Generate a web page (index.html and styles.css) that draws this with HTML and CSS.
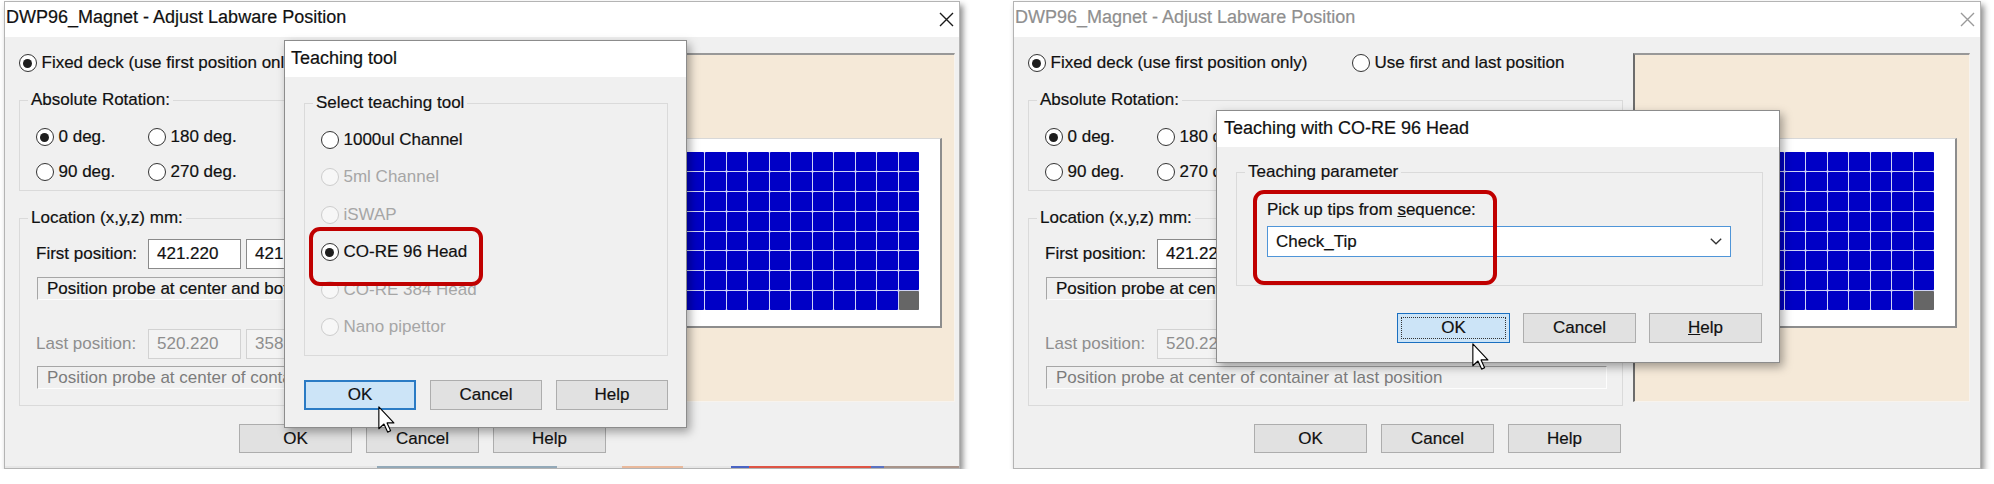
FILE: index.html
```html
<!DOCTYPE html>
<html>
<head>
<meta charset="utf-8">
<title>Adjust Labware Position</title>
<link rel="stylesheet" href="styles.css">
</head>
<body>
<div class="desk">

  <!-- LEFT WINDOW -->
  <div class="win win-a">
    <div class="titlebar">
      <span class="ttl">DWP96_Magnet - Adjust Labware Position</span>
      <svg class="close" width="15" height="15" viewBox="0 0 15 15"><path d="M1 1 L14 14 M14 1 L1 14" stroke="#1a1a1a" stroke-width="1.4" fill="none"/></svg>
    </div>
    <div class="wbody">
      <div class="col">
        <div class="toprow">
          <label class="opt opt1"><span class="rb on"></span>Fixed deck (use first position only)</label>
          <label class="opt"><span class="rb"></span>Use first and last position</label>
        </div>
        <fieldset class="grp rot">
          <legend>Absolute Rotation:</legend>
          <div class="rotgrid">
            <label class="opt"><span class="rb on"></span>0 deg.</label>
            <label class="opt"><span class="rb"></span>180 deg.</label>
            <label class="opt"><span class="rb"></span>90 deg.</label>
            <label class="opt"><span class="rb"></span>270 deg.</label>
          </div>
        </fieldset>
        <fieldset class="grp loc">
          <legend>Location (x,y,z) mm:</legend>
          <div class="locin">
            <div class="posrow">
              <span class="plabel">First position:</span>
              <span class="inp">421.220</span><span class="inp">421.500</span><span class="inp">103.400</span>
            </div>
            <div class="probe">Position probe at center and bottom of container</div>
            <div class="posrow lastrow">
              <span class="plabel dim">Last position:</span>
              <span class="inp off">520.220</span><span class="inp off">358.000</span><span class="inp off">103.400</span>
            </div>
            <div class="probe dimtext">Position probe at center of container at last position</div>
          </div>
        </fieldset>
        <div class="btnrow">
          <span class="btn">OK</span><span class="btn">Cancel</span><span class="btn">Help</span>
        </div>
      </div>
      <div class="deck">
        <div class="plate">
          <div class="wells">
            <i></i><i></i><i></i><i></i><i></i><i></i><i></i><i></i><i></i><i></i><i></i><i></i>
            <i></i><i></i><i></i><i></i><i></i><i></i><i></i><i></i><i></i><i></i><i></i><i></i>
            <i></i><i></i><i></i><i></i><i></i><i></i><i></i><i></i><i></i><i></i><i></i><i></i>
            <i></i><i></i><i></i><i></i><i></i><i></i><i></i><i></i><i></i><i></i><i></i><i></i>
            <i></i><i></i><i></i><i></i><i></i><i></i><i></i><i></i><i></i><i></i><i></i><i></i>
            <i></i><i></i><i></i><i></i><i></i><i></i><i></i><i></i><i></i><i></i><i></i><i></i>
            <i></i><i></i><i></i><i></i><i></i><i></i><i></i><i></i><i></i><i></i><i></i><i></i>
            <i></i><i></i><i></i><i></i><i></i><i></i><i></i><i></i><i></i><i></i><i></i><i class="g"></i>
          </div>
        </div>
      </div>
    </div>
    <div class="strip"></div>

    <div class="child child-a">
      <div class="titlebar ctitle"><span class="ttl">Teaching tool</span></div>
      <div class="cbody cbody-a">
        <fieldset class="grp sel">
          <legend>Select teaching tool</legend>
          <div class="tlist">
            <label class="opt"><span class="rb"></span>1000ul Channel</label>
            <label class="opt dis"><span class="rb"></span>5ml Channel</label>
            <label class="opt dis"><span class="rb"></span>iSWAP</label>
            <label class="opt"><span class="rb on"></span>CO-RE 96 Head</label>
            <label class="opt dis"><span class="rb"></span>CO-RE 384 Head</label>
            <label class="opt dis"><span class="rb"></span>Nano pipettor</label>
          </div>
        </fieldset>
        <div class="btnrow cbtns-a">
          <span class="btn btn-hot">OK</span><span class="btn">Cancel</span><span class="btn">Help</span>
        </div>
      </div>
      <div class="mark mark-a"></div>
      <svg class="cursor cursor-a" width="17" height="27" viewBox="0 0 12 19"><path d="M0.6 0.6 L0.6 16 L4.2 12.7 L6.8 18.4 L8.9 17.5 L6.4 11.9 L11.2 11.9 Z" fill="#fff" stroke="#000" stroke-width="0.8" stroke-linejoin="round"/></svg>
    </div>
  </div>

  <!-- RIGHT WINDOW -->
  <div class="win win-b">
    <div class="titlebar">
      <span class="ttl inactive">DWP96_Magnet - Adjust Labware Position</span>
      <svg class="close" width="15" height="15" viewBox="0 0 15 15"><path d="M1 1 L14 14 M14 1 L1 14" stroke="#9a9a9a" stroke-width="1.4" fill="none"/></svg>
    </div>
    <div class="wbody">
      <div class="col">
        <div class="toprow">
          <label class="opt opt1"><span class="rb on"></span>Fixed deck (use first position only)</label>
          <label class="opt"><span class="rb"></span>Use first and last position</label>
        </div>
        <fieldset class="grp rot">
          <legend>Absolute Rotation:</legend>
          <div class="rotgrid">
            <label class="opt"><span class="rb on"></span>0 deg.</label>
            <label class="opt"><span class="rb"></span>180 deg.</label>
            <label class="opt"><span class="rb"></span>90 deg.</label>
            <label class="opt"><span class="rb"></span>270 deg.</label>
          </div>
        </fieldset>
        <fieldset class="grp loc">
          <legend>Location (x,y,z) mm:</legend>
          <div class="locin">
            <div class="posrow">
              <span class="plabel">First position:</span>
              <span class="inp">421.220</span><span class="inp">421.500</span><span class="inp">103.400</span>
            </div>
            <div class="probe">Position probe at center and bottom of container</div>
            <div class="posrow lastrow">
              <span class="plabel dim">Last position:</span>
              <span class="inp off">520.220</span><span class="inp off">358.000</span><span class="inp off">103.400</span>
            </div>
            <div class="probe dimtext">Position probe at center of container at last position</div>
          </div>
        </fieldset>
        <div class="btnrow">
          <span class="btn">OK</span><span class="btn">Cancel</span><span class="btn">Help</span>
        </div>
      </div>
      <div class="deck">
        <div class="plate">
          <div class="wells">
            <i></i><i></i><i></i><i></i><i></i><i></i><i></i><i></i><i></i><i></i><i></i><i></i>
            <i></i><i></i><i></i><i></i><i></i><i></i><i></i><i></i><i></i><i></i><i></i><i></i>
            <i></i><i></i><i></i><i></i><i></i><i></i><i></i><i></i><i></i><i></i><i></i><i></i>
            <i></i><i></i><i></i><i></i><i></i><i></i><i></i><i></i><i></i><i></i><i></i><i></i>
            <i></i><i></i><i></i><i></i><i></i><i></i><i></i><i></i><i></i><i></i><i></i><i></i>
            <i></i><i></i><i></i><i></i><i></i><i></i><i></i><i></i><i></i><i></i><i></i><i></i>
            <i></i><i></i><i></i><i></i><i></i><i></i><i></i><i></i><i></i><i></i><i></i><i></i>
            <i></i><i></i><i></i><i></i><i></i><i></i><i></i><i></i><i></i><i></i><i></i><i class="g"></i>
          </div>
        </div>
      </div>
    </div>

    <div class="child child-b">
      <div class="titlebar ctitle"><span class="ttl">Teaching with CO-RE 96 Head</span></div>
      <div class="cbody cbody-b">
        <fieldset class="grp par">
          <legend>Teaching parameter</legend>
          <div class="parin">
            <div class="seqlabel">Pick up tips from <u>s</u>equence:</div>
            <div class="combo">
              <span>Check_Tip</span>
              <svg width="12" height="7" viewBox="0 0 12 7"><path d="M0.8 0.8 L6 5.8 L11.2 0.8" stroke="#333" stroke-width="1.3" fill="none"/></svg>
            </div>
          </div>
        </fieldset>
        <div class="btnrow cbtns-b">
          <span class="btn btn-focus"><span class="focusrect">OK</span></span><span class="btn">Cancel</span><span class="btn"><span><u>H</u>elp</span></span>
        </div>
      </div>
      <div class="mark mark-b"></div>
      <svg class="cursor cursor-b" width="17" height="27" viewBox="0 0 12 19"><path d="M0.6 0.6 L0.6 16 L4.2 12.7 L6.8 18.4 L8.9 17.5 L6.4 11.9 L11.2 11.9 Z" fill="#fff" stroke="#000" stroke-width="0.8" stroke-linejoin="round"/></svg>
    </div>
  </div>

</div>
</body>
</html>
```

FILE: styles.css
```css
* { box-sizing: border-box; }

body {
  margin: 0;
  background: #ffffff;
  font-family: "Liberation Sans", Arial, sans-serif;
  font-size: 17px;
  color: #111;
  -webkit-text-stroke: 0.2px;
}

.desk {
  display: flex;
  align-items: flex-start;
  gap: 53px;
  padding: 1px 0 0 4px;
}

/* main window */
.win {
  position: relative;
  height: 468px;
  background: #f0f0f0;
  border: 1px solid #b4b4b4;
  box-shadow: 3px 4px 6px rgba(0, 0, 0, 0.45);
  display: flex;
  flex-direction: column;
  flex: none;
}
.win-a { width: 956px; --pr: 4px; }
.win-b { width: 968px; --pr: 10px; }

.titlebar {
  flex: none;
  height: 35px;
  background: #fff;
  display: flex;
  align-items: center;
  justify-content: space-between;
  padding: 0 5px 4px 1px;
}
.ttl {
  font-size: 18px;
  white-space: nowrap;
}
.ttl.inactive { color: #8f8f8f; }
.close { flex: none; margin-top: 3px; }

.wbody {
  flex: 1;
  display: flex;
  padding: 15px var(--pr) 0 14px;
}

/* remnant of the window beneath, peeking out under the left dialog */
.strip {
  flex: none;
  height: 2px;
  background: linear-gradient(to right,
    #e6e6e6 0, #e6e6e6 372px,
    #93a9b8 372px, #93a9b8 552px,
    #e6e6e6 552px, #e6e6e6 617px,
    #e9b99c 617px, #e9b99c 678px,
    #e6e6e6 678px, #e6e6e6 726px,
    #4a64c4 726px, #4a64c4 744px,
    #de5444 744px, #de5444 866px,
    #5a72c2 866px, #5a72c2 879px,
    #a8948a 879px, #a8948a 100%);
}

.col {
  flex: 1;
  display: flex;
  flex-direction: column;
  min-width: 0;
}

/* radio buttons */
.opt {
  display: flex;
  align-items: center;
  gap: 5px;
  height: 22px;
  white-space: nowrap;
}
.rb {
  flex: none;
  width: 18px;
  height: 18px;
  margin-left: -0.5px;
  border: 1px solid #333;
  border-radius: 50%;
  background: #fff;
  display: inline-flex;
  align-items: center;
  justify-content: center;
}
.rb.on::after {
  content: "";
  width: 9px;
  height: 9px;
  border-radius: 50%;
  background: #1e1e1e;
}
.opt.dis { color: #a6a6a6; -webkit-text-stroke: 0; }
.opt.dis .rb { border-color: #cdcdcd; background: #f7f7f7; }

.toprow {
  display: flex;
  height: 22px;
}
.opt1 { width: 324px; }

/* group boxes */
.grp {
  margin: 0;
  min-width: 0;
  border: 1px solid #dadada;
  padding-left: 0;
  padding-right: 0;
}
.grp legend {
  margin-left: 8px;
  padding: 0 3px;
  line-height: 20px;
  height: 20px;
}

.rot {
  margin-top: 16px;
  padding-top: 16px;
  padding-bottom: 7px;
}
.rotgrid {
  display: grid;
  grid-template-columns: 112px 112px;
  row-gap: 13px;
  padding-left: 16px;
}

.loc {
  margin-top: 17px;
  padding-top: 11px;
  padding-bottom: 16px;
}
.locin { padding: 0 15px 0 16px; }
.posrow {
  display: flex;
  align-items: center;
  gap: 5px;
  height: 30px;
}
.lastrow { margin-top: 29px; }
.plabel { width: 107px; flex: none; }
.dim { color: #8e8e8e; -webkit-text-stroke: 0; }
.inp {
  flex: none;
  width: 93px;
  height: 30px;
  background: #fff;
  border: 1px solid #8a8a8a;
  padding-left: 8px;
  display: flex;
  align-items: center;
}
.inp.off {
  background: #f3f3f3;
  border-color: #d2d2d2;
  color: #8e8e8e;
  -webkit-text-stroke: 0;
}
.probe {
  margin-top: 8px;
  margin-left: 1px;
  height: 23px;
  border-top: 1px solid #a6a6a6;
  border-left: 1px solid #a6a6a6;
  border-right: 1px solid #fdfdfd;
  border-bottom: 1px solid #fdfdfd;
  padding-left: 9px;
  display: flex;
  align-items: center;
  white-space: nowrap;
  overflow: hidden;
}
.dimtext { color: #7c7c7c; margin-top: 7px; -webkit-text-stroke: 0; }

/* buttons */
.btnrow {
  display: flex;
  justify-content: flex-end;
  gap: 14px;
  margin-top: 18px;
  padding-right: 2px;
}
.btn {
  flex: none;
  width: 113px;
  height: 29px;
  background: #e1e1e1;
  border: 1px solid #adadad;
  display: flex;
  align-items: center;
  justify-content: center;
}
.btn-hot {
  background: #cce4f7;
  border: 2px solid #2b7bc4;
}
.btn-focus {
  background: #cce4f7;
  border: 1px solid #1a6fc0;
  padding: 3px;
}
.focusrect {
  width: 100%;
  height: 100%;
  border: 1px dotted #333;
  display: flex;
  align-items: center;
  justify-content: center;
}

/* deck panel */
.deck {
  flex: none;
  width: 337px;
  height: 349px;
  margin: 1px 0 0 10px;
  background: #f5e9d8;
  border-top: 2px solid #989898;
  border-left: 2px solid #6c6c6c;
  border-right: 1px solid #f7f3ee;
  border-bottom: 1px solid #f7f3ee;
  padding: 83px 0 0 17px;
}
.plate {
  width: 305px;
  height: 190px;
  background: #fff;
  border-top: 1px solid #d8d8d8;
  border-left: 1px solid #d8d8d8;
  border-right: 2px solid #8d8d8d;
  border-bottom: 2px solid #8d8d8d;
  padding: 13px 0 0 24px;
}
.wells {
  width: 257px;
  height: 158px;
  display: grid;
  grid-template-columns: repeat(12, 1fr);
  grid-template-rows: repeat(8, 1fr);
  gap: 1px;
  background: #cfd3f6;
}
.wells i {
  background: #0000c6;
  border-radius: 1px;
}
.wells i.g { background: #666; }

/* child dialogs */
.child {
  position: absolute;
  background: #f0f0f0;
  border: 1px solid #8c8c8c;
  box-shadow: 3px 4px 9px rgba(0, 0, 0, 0.35);
  display: flex;
  flex-direction: column;
}
.child-a { left: 279px; top: 38px; width: 403px; height: 388px; }
.child-b { left: 202px; top: 108px; width: 564px; height: 253px; }

.ctitle {
  height: 36px;
  padding: 0 0 2px 6px;
}
.child-b .ctitle { padding-left: 7px; }

.cbody { flex: 1; display: flex; flex-direction: column; }
.cbody-a { padding: 16px 18px 0 19px; }
.cbody-b { padding: 15px 16px 0 19px; }

.sel { padding-top: 16px; padding-bottom: 17px; }
.tlist {
  display: flex;
  flex-direction: column;
  gap: 15.4px;
  padding-left: 16px;
}
.cbtns-a { margin-top: 24px; height: 30px; padding-right: 0; }
.cbtns-a .btn { width: 112px; height: 30px; }

.par { padding-top: 17px; padding-bottom: 28px; }
.parin { padding: 0 31px 0 30px; }
.seqlabel { height: 22px; line-height: 22px; white-space: nowrap; }
.combo {
  margin-top: 5px;
  height: 31px;
  background: #fff;
  border: 1px solid #4f95d8;
  display: flex;
  align-items: center;
  justify-content: space-between;
  padding: 0 8px 0 8px;
}
.cbtns-b { margin-top: 27px; gap: 13px; padding-right: 1px; }
.cbtns-b .btn { height: 30px; }

/* annotations */
.mark {
  position: absolute;
  border: 4px solid #c00000;
  border-radius: 11px;
}
.mark-a { left: 24px; top: 186px; width: 174px; height: 59px; }
.mark-b { left: 36px; top: 79px; width: 244px; height: 95px; }

.cursor { position: absolute; }
.cursor-a { left: 93px; top: 365px; }
.cursor-b { left: 255px; top: 232px; }
```
